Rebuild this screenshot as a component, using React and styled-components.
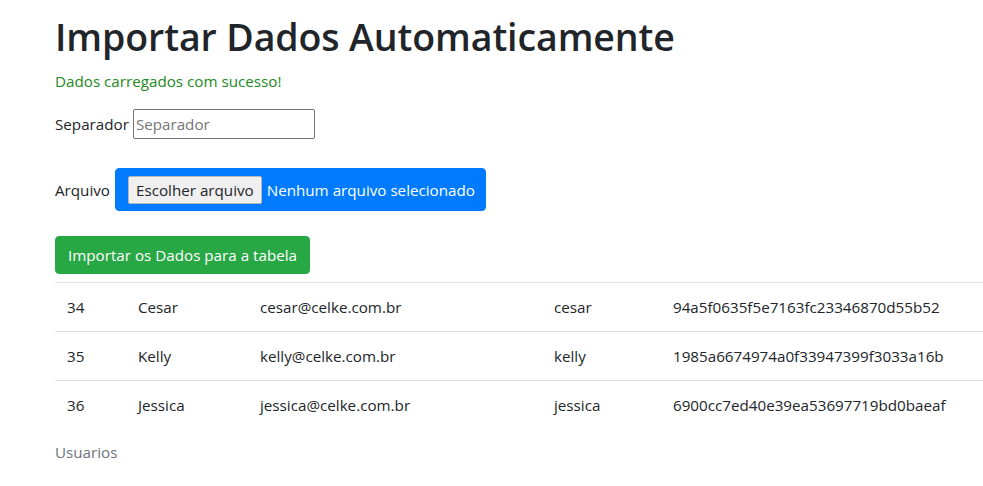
import React from "react";
import styled, { createGlobalStyle } from "styled-components";

const GlobalStyle = createGlobalStyle`
  body {
    margin: 0;
    font-family: "Open Sans", "Noto Sans", sans-serif;
    font-size: 15.2px;
    line-height: 24px;
    color: #212529;
    background: #fff;
  }
`;

const Page = styled.div`
  padding: 13px 0 0 55px;
`;

const Title = styled.h1`
  margin: 0 0 8px;
  font-size: 37.5px;
  font-weight: 600;
  line-height: 48px;
  letter-spacing: -0.1px;
`;

const Message = styled.p`
  margin: 0 0 16px;
  color: #218a21;
`;

const Field = styled.div`
  display: flex;
  align-items: center;
  gap: ${(props) => props.$gap || 4}px;
  margin-bottom: ${(props) => props.$after || 0}px;
`;

const Label = styled.label`
  white-space: nowrap;
`;

const TextInput = styled.input`
  box-sizing: border-box;
  width: 182px;
  height: 30px;
  padding: 1px 2px;
  border: 1px solid #767676;
  border-radius: 2px;
  font: inherit;
  color: #212529;

  &::placeholder {
    color: #757575;
  }
`;

const FileBox = styled.div`
  display: inline-flex;
  align-items: center;
  gap: 5px;
  padding: 7px 10px 6px 12px;
  border: 1px solid #007bff;
  border-radius: 4px;
  background: #007bff;
  color: #fff;
  white-space: nowrap;
`;

const FileButton = styled.span`
  box-sizing: border-box;
  display: inline-flex;
  align-items: center;
  height: 28px;
  padding: 0 7px;
  border: 1px solid #b8b8b8;
  border-radius: 2px;
  background: #efefef;
  color: #212529;
`;

const SubmitButton = styled.button`
  display: inline-block;
  padding: 6px 12px;
  border: 1px solid #28a745;
  border-radius: 4px;
  background: #28a745;
  color: #fff;
  font: inherit;
  line-height: 24px;
`;

const Table = styled.table`
  width: 100%;
  margin-top: 8px;
  border-collapse: collapse;
  table-layout: fixed;
`;

const Caption = styled.caption`
  caption-side: bottom;
  padding-top: 11px;
  text-align: left;
  color: #6c757d;
`;

const Cell = styled.td`
  width: ${(props) => (props.$width ? `${props.$width - 24}px` : "auto")};
  padding: 12px;
  border-top: 1px solid #dee2e6;
  vertical-align: top;
  white-space: nowrap;
`;

const widths = [71, 122, 294, 119, null];

const users = [
  ["34", "Cesar", "cesar@celke.com.br", "cesar", "94a5f0635f5e7163fc23346870d55b52"],
  ["35", "Kelly", "kelly@celke.com.br", "kelly", "1985a6674974a0f33947399f3033a16b"],
  ["36", "Jessica", "jessica@celke.com.br", "jessica", "6900cc7ed40e39ea53697719bd0baeaf"],
];

const App = () => {
  return (
    <Page>
      <GlobalStyle />
      <Title>Importar Dados Automaticamente</Title>
      <Message>Dados carregados com sucesso!</Message>

      <Field $after={29}>
        <Label htmlFor="separador">Separador</Label>
        <TextInput id="separador" placeholder="Separador" />
      </Field>

      <Field $gap={5} $after={25}>
        <Label>Arquivo</Label>
        <FileBox>
          <FileButton>Escolher arquivo</FileButton>
          Nenhum arquivo selecionado
        </FileBox>
      </Field>

      <SubmitButton type="button">Importar os Dados para a tabela</SubmitButton>

      <Table>
        <Caption>Usuarios</Caption>
        <tbody>
          {users.map((row) => (
            <tr key={row[0]}>
              {row.map((value, i) => (
                <Cell key={i} $width={widths[i]}>
                  {value}
                </Cell>
              ))}
            </tr>
          ))}
        </tbody>
      </Table>
    </Page>
  );
};

export default App;
